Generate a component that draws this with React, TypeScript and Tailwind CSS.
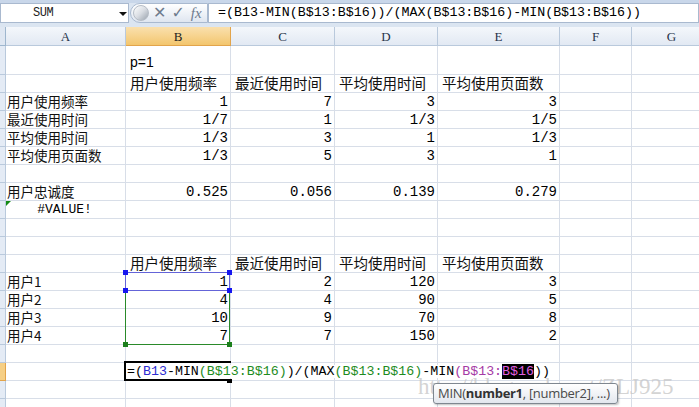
import React from 'react';

type Kind = 'lab' | 'hdr' | 'num' | 'p' | 'err';
type Cell = { t: string; k: Kind } | null;
type Row = { h: number; c: Cell[]; active?: boolean };

const COLS = [120, 105, 104, 103, 122, 72, 80];
const LETTERS = ['A', 'B', 'C', 'D', 'E', 'F', 'G'];

const L = (t: string): Cell => ({ t, k: 'lab' });
const H = (t: string): Cell => ({ t, k: 'hdr' });
const N = (t: string): Cell => ({ t, k: 'num' });

const hdrRow: Cell[] = [null, H('用户使用频率'), H('最近使用时间'), H('平均使用时间'), H('平均使用页面数')];

const rows: Row[] = [
  { h: 29, c: [null, { t: 'p=1', k: 'p' }] },
  { h: 18, c: hdrRow },
  { h: 18, c: [L('用户使用频率'), N('1'), N('7'), N('3'), N('3')] },
  { h: 18, c: [L('最近使用时间'), N('1/7'), N('1'), N('1/3'), N('1/5')] },
  { h: 18, c: [L('平均使用时间'), N('1/3'), N('3'), N('1'), N('1/3')] },
  { h: 18, c: [L('平均使用页面数'), N('1/3'), N('5'), N('3'), N('1')] },
  { h: 18, c: [] },
  { h: 18, c: [L('用户忠诚度'), N('0.525'), N('0.056'), N('0.139'), N('0.279')] },
  { h: 18, c: [{ t: '#VALUE!', k: 'err' }] },
  { h: 18, c: [] },
  { h: 18, c: [] },
  { h: 18, c: hdrRow },
  { h: 18, c: [L('用户1'), N('1'), N('2'), N('120'), N('3')] },
  { h: 18, c: [L('用户2'), N('4'), N('4'), N('90'), N('5')] },
  { h: 18, c: [L('用户3'), N('10'), N('9'), N('70'), N('8')] },
  { h: 18, c: [L('用户4'), N('7'), N('7'), N('150'), N('2')] },
  { h: 18, c: [] },
  { h: 18, c: [], active: true },
  { h: 18, c: [] },
  { h: 18, c: [] },
];

const cjk = "font-['Noto_Sans_CJK_SC','Noto_Sans',sans-serif]";
const mono = "font-['Liberation_Mono','DejaVu_Sans_Mono',monospace]";

const CellText = ({ cell }: { cell: Cell }) => {
  if (!cell) return null;
  if (cell.k === 'num')
    return <span className={`ml-auto pr-[2px] text-[14px] leading-none text-black ${mono}`}>{cell.t}</span>;
  if (cell.k === 'hdr')
    return <span className={`pl-[4px] text-[14.5px] leading-none whitespace-nowrap text-[#111] ${cjk}`}>{cell.t}</span>;
  if (cell.k === 'lab')
    return <span className={`pl-[1px] text-[13.5px] leading-none whitespace-nowrap text-[#111] ${cjk}`}>{cell.t}</span>;
  if (cell.k === 'p')
    return <span className="pl-[4px] pb-[5px] text-[14px] leading-none text-black font-['Liberation_Sans',sans-serif]">{cell.t}</span>;
  return (
    <span className={`mx-auto pr-[2px] text-[13px] leading-none text-black ${mono}`}>{cell.t}</span>
  );
};

const Formula = () => (
  <span className={`relative z-10 bg-white pl-[1px] pr-[2px] whitespace-nowrap text-[13.3px] leading-none ${mono}`}>
    <span className="text-black">=(</span>
    <span className="text-[#2b2bd0]">B13</span>
    <span className="text-black">-MIN</span>
    <span className="text-[#1e8c1e]">(B$13:B$16)</span>
    <span className="text-black">)/(MAX</span>
    <span className="text-[#1e8c1e]">(B$13:B$16)</span>
    <span className="text-black">-MIN</span>
    <span className="text-[#a53aa5]">(B$13:</span>
    <span className="bg-black text-[#e060e0]">B$16</span>
    <span className="text-black">))</span>
  </span>
);

const Corner = ({ cls }: { cls: string }) => <div className={`absolute w-[5px] h-[5px] ${cls}`} />;

export default function App() {
  return (
    <div className="relative w-[699px] h-[407px] overflow-hidden bg-white select-none">
      {/* formula bar */}
      <div className="h-[27px] bg-[#dbe5f1] border-t-[3px] border-[#c9d7ea] flex items-start">
        <div className="relative w-[129px] h-[20px] bg-white border border-[#a9b9cf] flex items-center">
          <span className={`ml-[32px] text-[12px] tracking-[-0.5px] text-[#222] ${mono}`}>SUM</span>
          <div className="absolute left-[118px] top-[8px] w-0 h-0 border-l-[4px] border-r-[4px] border-t-[4px] border-l-transparent border-r-transparent border-t-[#111]" />
        </div>
        <div className="ml-[1px] w-[78px] h-[20px] rounded-l-full bg-gradient-to-b from-[#ffffff] to-[#dfe6f0] border border-[#a9b9cf] flex items-center pl-[2px]">
          <div className="w-[16px] h-[16px] rounded-full bg-gradient-to-br from-[#ffffff] via-[#d9dde3] to-[#9aa3ae] border border-[#b5bcc6]" />
          <span className="ml-[4px] text-[16px] leading-none text-[#6e7b8e] font-['DejaVu_Sans',sans-serif]">✕</span>
          <span className="ml-[5px] text-[16px] leading-none text-[#6e7b8e] font-['DejaVu_Sans',sans-serif]">✓</span>
          <span className="ml-[6px] text-[15px] leading-none italic text-[#6e7b8e] font-['Liberation_Serif',serif]">fx</span>
        </div>
        <div className="flex-1 h-[20px] bg-white border border-[#a9b9cf] flex items-center pl-[9px]">
          <span className={`whitespace-nowrap text-[13.3px] leading-none text-black ${mono}`}>
            =(B13-MIN(B$13:B$16))/(MAX(B$13:B$16)-MIN(B$13:B$16))
          </span>
        </div>
      </div>

      {/* column header */}
      <div className="flex h-[19px]">
        <div className="w-[6px] shrink-0 bg-[#dfe7f2] border-r border-b border-[#9eb6ce]" />
        {COLS.map((w, i) => (
          <div
            key={i}
            style={{ width: w }}
            className={`shrink-0 flex items-center justify-center border-r border-b text-[13px] leading-none font-['Liberation_Serif',serif] ${
              i === 1
                ? 'bg-gradient-to-b from-[#fae0ad] to-[#f3c66d] border-[#e2a44b] text-[#222]'
                : 'bg-gradient-to-b from-[#f4f7fb] to-[#e2e9f3] border-[#b9c9dc] text-[#27344a]'
            }`}
          >
            {LETTERS[i]}
          </div>
        ))}
      </div>

      {/* sheet rows */}
      {rows.map((r, ri) => (
        <div key={ri} className="flex" style={{ height: r.h }}>
          <div
            className={`w-[6px] shrink-0 border-r border-b ${
              r.active ? 'bg-[#f6cf85] border-[#e2a44b]' : 'bg-[#e4ebf5] border-[#b9c9dc]'
            }`}
          />
          {COLS.map((w, ci) => (
            <div
              key={ci}
              style={{ width: w }}
              className={`relative shrink-0 flex border-r border-b border-[#d8dee8] ${
                r.c[ci]?.k === 'p' ? 'items-end' : 'items-center'
              }`}
            >
              <CellText cell={r.c[ci] ?? null} />
              {ri === 8 && ci === 0 && (
                <div className="absolute left-0 top-0 w-0 h-0 border-t-[5px] border-r-[5px] border-t-[#138a13] border-r-transparent" />
              )}
              {ri === 12 && ci === 1 && (
                <>
                  <div className="absolute left-[-1px] top-[-1px] w-[105px] h-[73px] border-[1.5px] border-[#2a8a2a] z-10" />
                  <Corner cls="left-[-3px] top-[69px] bg-[#1b7f1b] z-10" />
                  <Corner cls="left-[101px] top-[69px] bg-[#1b7f1b] z-10" />
                  <div className="absolute left-[-1px] top-[-1px] w-[105px] h-[19px] border-[1.5px] border-[#6464d8] z-20" />
                  <Corner cls="left-[-3px] top-[-3px] bg-[#1616f0] z-20" />
                  <Corner cls="left-[101px] top-[-3px] bg-[#1616f0] z-20" />
                  <Corner cls="left-[-3px] top-[15px] bg-[#1616f0] z-20" />
                  <Corner cls="left-[101px] top-[15px] bg-[#1616f0] z-20" />
                </>
              )}
              {r.active && ci === 1 && (
                <>
                  <Formula />
                  <div className="absolute left-[-2px] top-[-2px] w-[107px] h-[20px] border-2 border-r-0 border-black z-20" />
                  <div className="absolute left-[101px] top-[16px] w-[5px] h-[4px] bg-black z-20" />
                </>
              )}
            </div>
          ))}
        </div>
      ))}

      {/* watermark */}
      <div className="absolute left-[418px] top-[375px] z-30 text-[23px] leading-none whitespace-nowrap text-[#c8c8c8]/80 font-['Liberation_Serif',serif]">
        http://blog.csdn.net/ZLJ925
      </div>

      {/* function tooltip */}
      <div className="absolute left-[433px] top-[383px] z-40 w-[185px] h-[21px] rounded-[3px] border border-[#7f8790] bg-gradient-to-b from-[#ffffff] to-[#e3e7ee] shadow-[1px_1px_2px_rgba(0,0,0,0.25)] flex items-center pl-[4px]">
        <span className="text-[13px] leading-none text-[#4a4a4a] whitespace-nowrap font-['Open_Sans','Noto_Sans',sans-serif] tracking-[-0.3px]">
          MIN(<b className="text-[#333]">number1</b>, [number2], ...)
        </span>
      </div>
    </div>
  );
}
